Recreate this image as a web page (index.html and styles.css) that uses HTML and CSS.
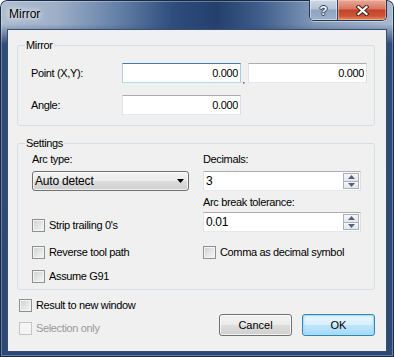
FILE: index.html
```html
<!DOCTYPE html>
<html lang="en">
<head>
    <meta charset="UTF-8">
    <title>Mirror</title>
    <link rel="stylesheet" href="styles.css">
</head>
<body>

    <div class="window">
        <div class="titlebar">
            <span class="title">Mirror</span>
            <div class="caption-buttons">
                <div class="cap-btn help">?</div>
                <div class="cap-btn close">
                    <svg width="13" height="11" viewBox="0 0 13 11"><path d="M2.5 2 L10.5 9 M10.5 2 L2.5 9" stroke="#4a2018" stroke-width="4.2" stroke-linecap="square"/><path d="M2.5 2 L10.5 9 M10.5 2 L2.5 9" stroke="#fff" stroke-width="2.2" stroke-linecap="square"/></svg>
                </div>
            </div>
        </div>

        <div class="client">
            <!-- Mirror -->
            <div class="group mirror-group">
                <span class="legend">Mirror</span>
                <div class="row">
                    <span class="row-label">Point (X,Y):</span>
                    <input class="field focus" type="text" value="0.000">
                    <span class="comma">,</span>
                    <input class="field" type="text" value="0.000">
                </div>
                <div class="row">
                    <span class="row-label">Angle:</span>
                    <input class="field" type="text" value="0.000">
                </div>
            </div>

            <!-- Settings -->
            <div class="group settings-group">
                <span class="legend">Settings</span>
                <div class="col col-left">
                    <span class="lbl">Arc type:</span>
                    <div class="combo">
                        <span>Auto detect</span>
                        <svg width="7" height="4" viewBox="0 0 7 4"><path d="M0 0 H7 L3.5 4 Z" fill="#000"/></svg>
                    </div>
                    <div class="check strip"><span class="box"></span>Strip trailing 0's</div>
                    <div class="check reverse"><span class="box"></span>Reverse tool path</div>
                    <div class="check assume"><span class="box"></span>Assume G91</div>
                </div>
                <div class="col col-right">
                    <span class="lbl">Decimals:</span>
                    <div class="spin">
                        <span class="spin-value">3</span>
                        <div class="spin-btns">
                            <div class="sb"><svg width="7" height="4" viewBox="0 0 7 4"><path d="M3.5 0 L7 4 H0 Z" fill="#4e6287"/></svg></div>
                            <div class="sb"><svg width="7" height="4" viewBox="0 0 7 4"><path d="M0 0 H7 L3.5 4 Z" fill="#4e6287"/></svg></div>
                        </div>
                    </div>
                    <span class="lbl lbl-tol">Arc break tolerance:</span>
                    <div class="spin spin-tol">
                        <span class="spin-value">0.01</span>
                        <div class="spin-btns">
                            <div class="sb"><svg width="7" height="4" viewBox="0 0 7 4"><path d="M3.5 0 L7 4 H0 Z" fill="#4e6287"/></svg></div>
                            <div class="sb"><svg width="7" height="4" viewBox="0 0 7 4"><path d="M0 0 H7 L3.5 4 Z" fill="#4e6287"/></svg></div>
                        </div>
                    </div>
                    <div class="check comma-check"><span class="box"></span>Comma as decimal symbol</div>
                </div>
            </div>

            <!-- Bottom -->
            <div class="bottom">
                <div class="bottom-checks">
                    <div class="check"><span class="box"></span>Result to new window</div>
                    <div class="check disabled"><span class="box"></span>Selection only</div>
                </div>
                <div class="buttons">
                    <button class="btn">Cancel</button>
                    <button class="btn btn-default">OK</button>
                </div>
            </div>
        </div>
    </div>

</body>
</html>
```

FILE: styles.css
```css
* { box-sizing: border-box; }
body { margin: 0; background: #ffffff; font-family: "Liberation Sans", Arial, sans-serif; font-size: 11px; letter-spacing: -0.35px; color: #000; }

/* Ventana */
.window { width: 394px; height: 357px; border-radius: 7px 7px 0 0; overflow: hidden; display: flex; flex-direction: column;
    background:
        linear-gradient(180deg, rgba(44, 74, 120, 0) 0, rgba(44, 74, 120, 0) 24px, #2e4c7b 44px, #2b4876 100%),
        linear-gradient(90deg, #aebdd0 0%, #9eb0c8 14%, #6480a7 30%, #2e4d7c 44%, #243f6c 55%, #3f5e8b 66%, #8299b8 80%, #a9b9cd 100%);
    box-shadow: inset 0 0 0 1px #1b2a42, inset 0 0 0 2px rgba(255, 255, 255, 0.3); }

.titlebar { height: 29px; display: flex; align-items: flex-start; padding-left: 9px; flex: none; }
.title { margin-top: 7px; font-size: 12px; line-height: 15px; letter-spacing: 0; text-shadow: 0 0 5px #fff, 0 0 9px rgba(255, 255, 255, 0.9); }
.caption-buttons { margin-left: auto; margin-right: 7px; display: flex; height: 21px; border: 1px solid #26354f; border-top: 0; border-radius: 0 0 5px 5px; overflow: hidden; box-shadow: 0 1px 0 rgba(255, 255, 255, 0.45); }
.cap-btn { display: flex; justify-content: center; align-items: center; color: #fff; font-weight: bold; }
.help { width: 28px; border-right: 1px solid #34445f; font-size: 13px; letter-spacing: 0; background: linear-gradient(#cfd9e5, #b3c2d5 45%, #8fa4c0 50%, #9cb1cc 100%); box-shadow: inset 0 0 0 1px rgba(255, 255, 255, 0.45);
    text-shadow: 1px 0 #2a3a55, -1px 0 #2a3a55, 0 1px #2a3a55, 0 -1px #2a3a55; }
.close { width: 48px; background: linear-gradient(#eaa99a, #d8755f 45%, #c3412a 50%, #cc5536 80%, #e1906b 100%); box-shadow: inset 0 0 0 1px rgba(255, 210, 190, 0.45); }

.client { margin: 0 7px; height: 323px; flex: none; border: 1px solid #3a4f70; background: #f0f0f0; padding: 15px 11px 0 9px; }

/* Grupos */
.group { position: relative; border: 1px solid #d5dfe5; border-radius: 3px; }
.legend { position: absolute; top: -7px; left: 7px; padding: 0 1px; background: #f0f0f0; line-height: 13px; }

.mirror-group { padding: 17px 7px 10px 13px; }
.row { display: flex; align-items: center; }
.row + .row { margin-top: 12px; }
.row-label { width: 91px; }
.field { width: 119px; height: 20px; margin: 0; border: 1px solid; border-color: #abadb3 #dbdfe6 #e3e9ef #e2e3ea; background: #fff; text-align: right; padding: 0 2px; font: inherit; letter-spacing: inherit; color: #000; outline: none; }
.field.focus { border-color: #3d7bad #a4c9e3 #b7d9ed #b5cfe7; }
.comma { width: 7px; align-self: flex-end; text-align: center; line-height: 6px; font-size: 9px; margin-left: -1px; margin-right: 1px; }

.settings-group { margin-top: 17px; padding: 9px 13px 6px 14px; display: flex; gap: 14px; }
.col { display: flex; flex-direction: column; }
.col-left { width: 157px; }
.col-right { width: 158px; }
.lbl { line-height: 13px; }
.lbl-tol { margin-top: 5px; }

.combo { margin-top: 5px; height: 20px; border: 1px solid #707070; border-radius: 3px; display: flex; align-items: center; justify-content: space-between; padding: 0 4px 0 2px; font-size: 12px; letter-spacing: -0.2px;
    background: linear-gradient(#f2f2f2, #ebebeb 50%, #dddddd 50%, #cfcfcf); box-shadow: inset 0 0 0 1px rgba(255, 255, 255, 0.7); }

.spin { margin-top: 5px; height: 20px; display: flex; border: 1px solid; border-color: #abadb3 #dbdfe6 #e3e9ef #e2e3ea; background: #fff; }
.spin-tol { margin-top: 3px; }
.spin-value { flex: 1; padding-left: 2px; line-height: 18px; font-size: 12px; }
.spin-btns { width: 17px; display: flex; flex-direction: column; padding: 1px 1px 1px 0; }
.sb { flex: 1; display: flex; justify-content: center; align-items: center; border: 1px solid #a9b0ba; background: linear-gradient(#f7f7f7, #e4e6e9); }
.sb + .sb { border-top: 0; }

/* Casillas */
.check { display: flex; align-items: center; height: 13px; line-height: 13px; white-space: nowrap; }
.box { width: 13px; height: 13px; margin-right: 4px; flex: none; border: 1px solid #8e8f8f; background: linear-gradient(135deg, #cdd0d4, #f7f7f7); box-shadow: inset 0 0 0 1px #f4f4f4; }
.check.disabled { color: #9a9a9a; }
.check.disabled .box { border-color: #c5c5c5; background: #f4f4f4; box-shadow: none; }
.strip { margin-top: 28px; }
.reverse { margin-top: 14px; }
.assume { margin-top: 11px; }
.comma-check { margin-top: 14px; }

.bottom { display: flex; align-items: flex-end; margin-top: 9px; padding-left: 2px; }
.bottom-checks .check + .check { margin-top: 10px; }
.buttons { margin-left: auto; display: flex; gap: 10px; margin-bottom: -1px; }
.btn { width: 73px; height: 22px; margin: 0; padding: 0; font: inherit; letter-spacing: 0; color: #000; border: 1px solid #707070; border-radius: 3px;
    background: linear-gradient(#f2f2f2, #ebebeb 50%, #dddddd 50%, #cfcfcf); box-shadow: inset 0 0 0 1px rgba(255, 255, 255, 0.75); }
.btn-default { border-color: #3c7fb1; background: linear-gradient(#eaf6fd, #d9f0fc 50%, #bee6fd 50%, #a7d9f5); box-shadow: inset 0 0 0 1px #9fe4fb, inset 0 0 3px #6fd0f6; }
```
